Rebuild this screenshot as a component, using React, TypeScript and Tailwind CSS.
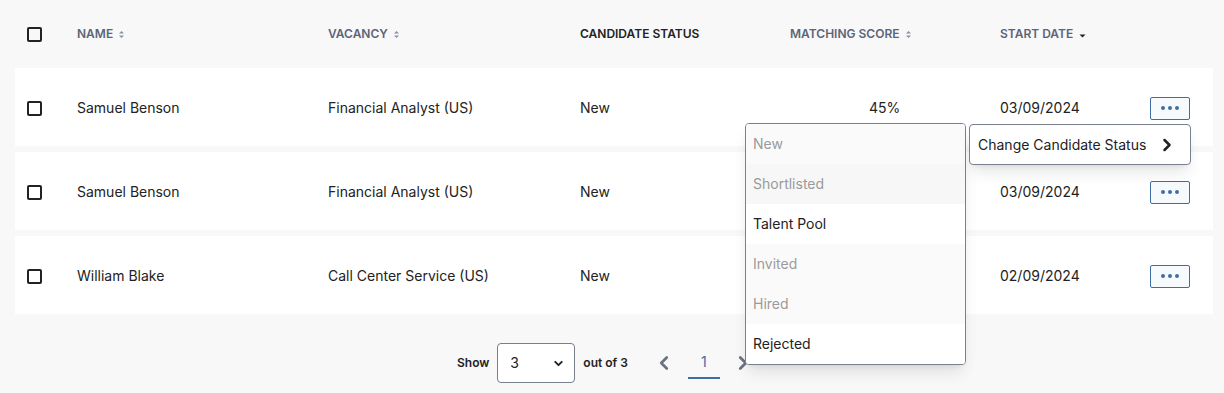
import { ChevronDown, ChevronLeft, ChevronRight } from "lucide-react";

const rows = [
  { name: "Samuel Benson", vacancy: "Financial Analyst (US)", status: "New", score: "45%", date: "03/09/2024" },
  { name: "Samuel Benson", vacancy: "Financial Analyst (US)", status: "New", score: "", date: "03/09/2024" },
  { name: "William Blake", vacancy: "Call Center Service (US)", status: "New", score: "", date: "02/09/2024" },
];

const statuses = [
  { label: "New", disabled: true },
  { label: "Shortlisted", disabled: true },
  { label: "Talent Pool", disabled: false },
  { label: "Invited", disabled: true },
  { label: "Hired", disabled: true },
  { label: "Rejected", disabled: false },
];

const cols = "grid grid-cols-[62px_251px_252px_210px_210px_150px_auto] items-center";

function Checkbox() {
  return <span className="block h-[15px] w-[15px] rounded-[2px] border-2 border-[#222]" />;
}

function SortIcon() {
  return (
    <svg width="7" height="9" viewBox="0 0 7 9" className="ml-[5px] inline-block">
      <path d="M3.5 1 L6 3.5 H1 Z" fill="#8a90a0" />
      <path d="M3.5 8 L6 5.5 H1 Z" fill="#8a90a0" />
    </svg>
  );
}

function DotsButton() {
  return (
    <button className="flex h-[23px] w-[40px] items-center justify-center gap-[3px] rounded-[2px] border border-[#3f6ea3] bg-[#f6fafd]">
      <span className="h-[4px] w-[4px] rounded-full bg-[#3f6ea3]" />
      <span className="h-[4px] w-[4px] rounded-full bg-[#3f6ea3]" />
      <span className="h-[4px] w-[4px] rounded-full bg-[#3f6ea3]" />
    </button>
  );
}

export default function App() {
  return (
    <div
      className="relative h-[393px] w-[1224px] overflow-hidden bg-[#f8f8f9] text-[#222]"
      style={{ fontFamily: "Inter, 'Noto Sans', sans-serif" }}
    >
      <div className="pl-[15px] pr-[11px]">
        {/* HEADER */}
        <div className={`${cols} h-[68px] text-[12px] font-semibold uppercase text-[#5d6478]`}>
          <div className="pl-[12px]">
            <Checkbox />
          </div>
          <div className="flex items-center">
            Name
            <SortIcon />
          </div>
          <div className="flex items-center">
            Vacancy
            <SortIcon />
          </div>
          <div className="text-[#222]">Candidate Status</div>
          <div className="flex items-center">
            Matching Score
            <SortIcon />
          </div>
          <div className="flex items-center">
            Start Date
            <svg width="7" height="4" viewBox="0 0 7 4" className="ml-[6px] mt-[3px]">
              <path d="M0.5 0.5 H6.5 L3.5 3.5 Z" fill="#222" />
            </svg>
          </div>
          <div />
        </div>

        {/* ROWS */}
        <div className="flex flex-col gap-[6px]">
          {rows.map((row, i) => (
            <div key={i} className={`${cols} h-[78px] bg-white pt-[2px] text-sm`}>
              <div className="pl-[12px]">
                <Checkbox />
              </div>
              <div>{row.name}</div>
              <div>{row.vacancy}</div>
              <div>{row.status}</div>
              <div className="pl-[79px]">{row.score}</div>
              <div>{row.date}</div>
              <div>
                <DotsButton />
              </div>
            </div>
          ))}
        </div>

        {/* PAGINATION */}
        <div className="mt-[29px] flex items-center pl-[442px] text-xs">
          <span className="font-semibold">Show</span>
          <div className="ml-[8px] flex h-[40px] w-[78px] items-center justify-between rounded-[4px] border border-[#7a7f8c] bg-white pl-[12px] pr-[9px] text-sm">
            3
            <ChevronDown size={13} strokeWidth={3.5} />
          </div>
          <span className="ml-[8px] font-semibold">out of 3</span>
          <ChevronLeft size={22} strokeWidth={3} className="ml-[25px] text-[#6c7282]" />
          <span className="ml-[13px] flex h-[32px] w-[32px] items-center justify-center border-b-2 border-[#3f6ea3] text-sm text-[#3f6ea3]">
            1
          </span>
          <ChevronRight size={22} strokeWidth={3} className="ml-[12px] text-[#6c7282]" />
        </div>
      </div>

      {/* STATUS MENU */}
      <div className="absolute left-[745px] top-[123px] w-[221px] overflow-hidden rounded-[4px] border border-[#7b8090] bg-white text-sm shadow-lg">
        {statuses.map((s, i) => (
          <div
            key={s.label}
            className={`flex h-[40px] items-center px-[7px] ${
              s.disabled ? (i === 1 ? "bg-[#f7f7f7] text-[#9a9a9a]" : "bg-[#fafafa] text-[#9a9a9a]") : "bg-white text-[#222]"
            }`}
          >
            {s.label}
          </div>
        ))}
      </div>

      {/* ACTION MENU */}
      <div className="absolute left-[969px] top-[124px] flex h-[41px] w-[222px] items-center justify-between rounded-[4px] border border-[#7b8090] bg-white pl-[8px] pr-[13px] text-sm shadow-lg">
        Change Candidate Status
        <ChevronRight size={20} strokeWidth={3} />
      </div>
    </div>
  );
}
